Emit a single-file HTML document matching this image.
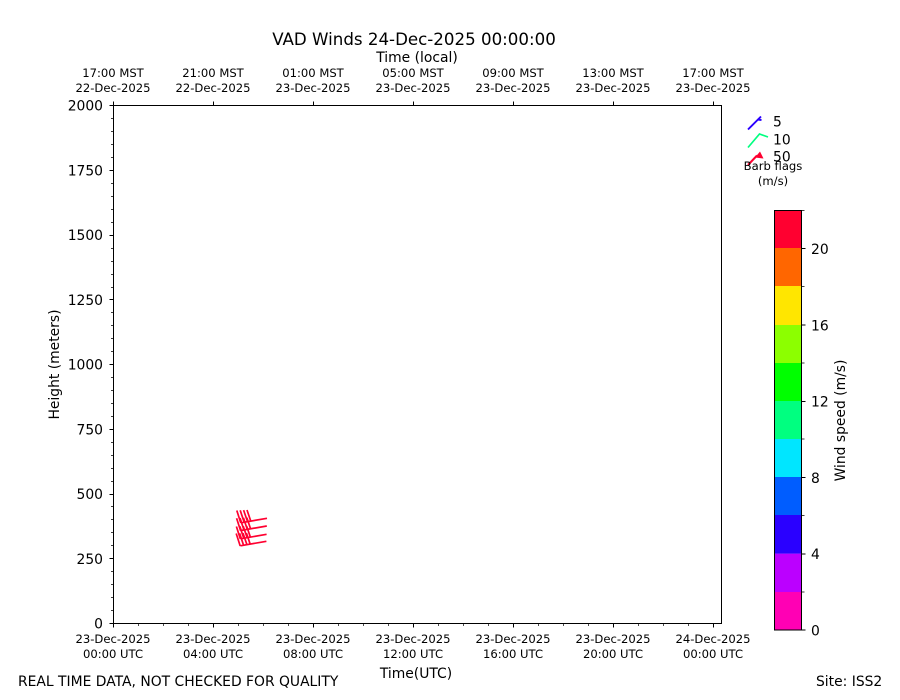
<!DOCTYPE html>
<html><head><meta charset="utf-8"><style>
html,body{margin:0;padding:0;background:#fff;width:900px;height:700px;overflow:hidden}
svg{display:block}
text{font-family:"DejaVu Sans",sans-serif;fill:#000}
.s{font-size:11.6px;text-anchor:middle}
.t{font-size:13.89px}
.y{font-size:13.89px;text-anchor:end}
</style></head><body>
<svg width="900" height="700" viewBox="0 0 900 700" xmlns="http://www.w3.org/2000/svg">
<rect width="900" height="700" fill="#fff"/>
<text x="414" y="45" text-anchor="middle" style="font-size:16.67px">VAD Winds 24-Dec-2025 00:00:00</text>
<text x="417" y="62" class="t" text-anchor="middle" style="font-size:13.89px">Time (local)</text>

<g class="s">
<text class="s" x="113" y="77">17:00 MST</text><text class="s" x="113" y="92">22-Dec-2025</text>
<text class="s" x="213" y="77">21:00 MST</text><text class="s" x="213" y="92">22-Dec-2025</text>
<text class="s" x="313" y="77">01:00 MST</text><text class="s" x="313" y="92">23-Dec-2025</text>
<text class="s" x="413" y="77">05:00 MST</text><text class="s" x="413" y="92">23-Dec-2025</text>
<text class="s" x="513" y="77">09:00 MST</text><text class="s" x="513" y="92">23-Dec-2025</text>
<text class="s" x="613" y="77">13:00 MST</text><text class="s" x="613" y="92">23-Dec-2025</text>
<text class="s" x="713" y="77">17:00 MST</text><text class="s" x="713" y="92">23-Dec-2025</text>

<text class="s" x="113" y="643">23-Dec-2025</text><text class="s" x="113" y="658">00:00 UTC</text>
<text class="s" x="213" y="643">23-Dec-2025</text><text class="s" x="213" y="658">04:00 UTC</text>
<text class="s" x="313" y="643">23-Dec-2025</text><text class="s" x="313" y="658">08:00 UTC</text>
<text class="s" x="413" y="643">23-Dec-2025</text><text class="s" x="413" y="658">12:00 UTC</text>
<text class="s" x="513" y="643">23-Dec-2025</text><text class="s" x="513" y="658">16:00 UTC</text>
<text class="s" x="613" y="643">23-Dec-2025</text><text class="s" x="613" y="658">20:00 UTC</text>
<text class="s" x="713" y="643">24-Dec-2025</text><text class="s" x="713" y="658">00:00 UTC</text>
</g>

<!-- barbs -->
<g stroke="#ff0030" fill="none" stroke-width="1.7">
<g><path d="M267 518.3L241 522.8"/><path d="M236.8 510.5L240.8 523M240.2 510.3L244.2 522.4M243.6 510.1L247.6 521.9M247 510L250.8 521.2"/></g>
<g transform="translate(-0.2,7.7)"><path d="M267 518.3L241 522.8"/><path d="M236.8 510.5L240.8 523M240.2 510.3L244.2 522.4M243.6 510.1L247.6 521.9M247 510L250.8 521.2"/></g>
<g transform="translate(-0.4,16)"><path d="M267 518.3L241 522.8"/><path d="M236.8 510.5L240.8 523M240.2 510.3L244.2 522.4M243.6 510.1L247.6 521.9M247 510L250.8 521.2"/></g>
<g transform="translate(-0.6,23)"><path d="M267 518.3L241 522.8"/><path d="M236.8 510.5L240.8 523M240.2 510.3L244.2 522.4M243.6 510.1L247.6 521.9M247 510L250.8 521.2"/></g>
</g>

<!-- axes box -->
<rect x="113.5" y="105.5" width="608" height="518" fill="none" stroke="#000" stroke-width="1"/>
<path stroke="#000" stroke-width="1" fill="none" d="
M113.5 623.5v4M213.5 623.5v4M313.5 623.5v4M413.5 623.5v4M513.5 623.5v4M613.5 623.5v4M713.5 623.5v4
M113.5 105.5v-4M213.5 105.5v-4M313.5 105.5v-4M413.5 105.5v-4M513.5 105.5v-4M613.5 105.5v-4M713.5 105.5v-4
M113.5 623.5h-4M113.5 558.5h-4M113.5 494.5h-4M113.5 429.5h-4M113.5 364.5h-4M113.5 299.5h-4M113.5 235.5h-4M113.5 170.5h-4M113.5 105.5h-4"/>
<path stroke="#000" stroke-width="0.7" fill="none" d="
M138.5 623.5v2.5M163.5 623.5v2.5M188.5 623.5v2.5M238.5 623.5v2.5M263.5 623.5v2.5M288.5 623.5v2.5M338.5 623.5v2.5M363.5 623.5v2.5M388.5 623.5v2.5M438.5 623.5v2.5M463.5 623.5v2.5M488.5 623.5v2.5M538.5 623.5v2.5M563.5 623.5v2.5M588.5 623.5v2.5M638.5 623.5v2.5M663.5 623.5v2.5M688.5 623.5v2.5
M113.5 610.5h-2.5M113.5 597.5h-2.5M113.5 584.5h-2.5M113.5 571.5h-2.5M113.5 545.5h-2.5M113.5 532.5h-2.5M113.5 519.5h-2.5M113.5 506.5h-2.5M113.5 481.5h-2.5M113.5 468.5h-2.5M113.5 455.5h-2.5M113.5 442.5h-2.5M113.5 416.5h-2.5M113.5 403.5h-2.5M113.5 390.5h-2.5M113.5 377.5h-2.5M113.5 351.5h-2.5M113.5 338.5h-2.5M113.5 325.5h-2.5M113.5 312.5h-2.5M113.5 287.5h-2.5M113.5 274.5h-2.5M113.5 261.5h-2.5M113.5 248.5h-2.5M113.5 222.5h-2.5M113.5 209.5h-2.5M113.5 196.5h-2.5M113.5 183.5h-2.5M113.5 157.5h-2.5M113.5 144.5h-2.5M113.5 131.5h-2.5M113.5 118.5h-2.5"/>

<text class="y" x="103" y="628.5">0</text>
<text class="y" x="103" y="564">250</text>
<text class="y" x="103" y="499">500</text>
<text class="y" x="103" y="434.5">750</text>
<text class="y" x="103" y="369.5">1000</text>
<text class="y" x="103" y="305">1250</text>
<text class="y" x="103" y="240">1500</text>
<text class="y" x="103" y="175.5">1750</text>
<text class="y" x="103" y="110.5">2000</text>

<text transform="translate(59,364.5) rotate(-90)" text-anchor="middle" style="font-size:13.89px">Height (meters)</text>
<text x="416" y="678" text-anchor="middle" style="font-size:13.89px">Time(UTC)</text>
<text x="18" y="686" style="font-size:13.89px">REAL TIME DATA, NOT CHECKED FOR QUALITY</text>
<text x="816" y="686" style="font-size:13.89px">Site: ISS2</text>

<!-- legend -->
<path d="M748 129.5L761 116.5M757.5 119.5L761.5 120" stroke="#2a00ff" stroke-width="1.9" fill="none"/>
<path d="M748 147.5L759.5 134L768 137" stroke="#00ff80" stroke-width="1.7" fill="none"/>
<path d="M748 165L757 155.5" stroke="#ff0030" stroke-width="2" fill="none"/>
<path d="M755 157.5L760 151.5L763.5 158.5Z" fill="#ff0030"/>
<text x="773" y="126.5" style="font-size:13.89px">5</text>
<text x="773" y="144.5" style="font-size:13.89px">10</text>
<text x="773" y="161.5" style="font-size:13.89px">50</text>
<text class="s" x="773" y="170">Barb flags</text>
<text class="s" x="773" y="185">(m/s)</text>

<!-- colorbar -->
<rect x="774" y="592" width="28" height="38" fill="#ff00b4"/>
<rect x="774" y="553.6" width="28" height="38.4" fill="#bb00ff"/>
<rect x="774" y="515" width="28" height="38.6" fill="#2a00ff"/>
<rect x="774" y="477" width="28" height="38" fill="#005dff"/>
<rect x="774" y="439" width="28" height="38" fill="#00e6ff"/>
<rect x="774" y="401" width="28" height="38" fill="#00ff80"/>
<rect x="774" y="363" width="28" height="38" fill="#00ff00"/>
<rect x="774" y="325" width="28" height="38" fill="#8cff00"/>
<rect x="774" y="286" width="28" height="39" fill="#ffe600"/>
<rect x="774" y="248" width="28" height="38" fill="#ff6600"/>
<rect x="774" y="210.5" width="28" height="37.5" fill="#ff0030"/>
<rect x="774.5" y="210.5" width="27" height="419.5" fill="none" stroke="#000" stroke-width="1"/>
<path stroke="#000" stroke-width="1" fill="none" d="M801.5 630h4M801.5 554h4M801.5 477.5h4M801.5 401.5h4M801.5 325h4M801.5 248.5h4"/>
<path stroke="#000" stroke-width="0.8" fill="none" d="M801.5 592h3M801.5 515.5h3M801.5 439h3M801.5 363h3M801.5 286.5h3M801.5 210.5h3"/>
<text x="811" y="635.5" style="font-size:13.89px">0</text>
<text x="811" y="559" style="font-size:13.89px">4</text>
<text x="811" y="483" style="font-size:13.89px">8</text>
<text x="811" y="406.5" style="font-size:13.89px">12</text>
<text x="811" y="330.5" style="font-size:13.89px">16</text>
<text x="811" y="254" style="font-size:13.89px">20</text>
<text transform="translate(845,420.5) rotate(-90)" text-anchor="middle" style="font-size:13.89px">Wind speed (m/s)</text>
</svg>
</body></html>
